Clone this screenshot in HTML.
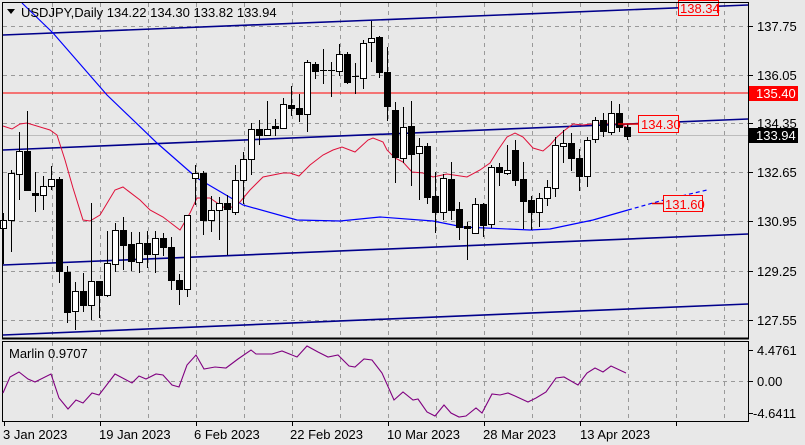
<!DOCTYPE html>
<html><head><meta charset="utf-8">
<style>
html,body{margin:0;padding:0;background:#e8e8e8;}
svg{display:block;font-family:"Liberation Sans",Tahoma,sans-serif;}
</style></head>
<body>
<svg id="s" width="805" height="445" xmlns="http://www.w3.org/2000/svg">
<rect x="0" y="0" width="805" height="445" fill="#e8e8e8"/>
<g id="grid" stroke="#999999" stroke-dasharray="4,4" stroke-width="1"></g>
<line x1="3" y1="135.5" x2="748" y2="135.5" stroke="#bcbcbc"/>
<g stroke="#00008b" stroke-width="1.6" fill="none">
<line x1="3" y1="35" x2="748" y2="5"/>
<line x1="3" y1="150" x2="748" y2="119"/>
<line x1="3" y1="265" x2="748" y2="234"/>
<line x1="3" y1="335" x2="748" y2="304"/>
</g>
<line x1="3" y1="93" x2="748" y2="93" stroke="#ff0000" stroke-width="1"/>
<polyline fill="none" stroke="#0000ff" stroke-width="1.2" points="22,3 53,33 107,95 157,143 197,178 243,205 297,220 340,221 380,217 433,221 463,227 530,230 550,229 593,220 628,210"/>
<polyline fill="none" stroke="#0000ff" stroke-width="1.2" stroke-dasharray="4,3" points="628,210 660,201 707,190"/>
<polyline fill="none" stroke="#e0103a" stroke-width="1" points="3,126 12,129 20,124 27,123 50,130 57,135 65,160 73,188 83,220 90,221 100,215 115,190 123,187 140,200 150,210 163,217 180,230 190,213 197,198 210,198 223,207 230,208 240,202 250,190 263,177 283,173 290,173 299,176 310,165 323,155 333,150 342,147 355,152 368,140 373,138 383,142 387,150 395,158 403,162 412,172 423,173 433,177 447,174 467,177 480,170 490,163 498,150 507,137 515,133 523,137 533,148 543,151 550,145 557,137 565,130 573,124 583,125 600,123 620,124 628,128"/>
<g id="candles"></g>
<line x1="618" y1="124" x2="638" y2="124" stroke="#e00000" stroke-width="1.5"/>
<rect x="638.5" y="115.5" width="40" height="17" fill="#e8e8e8" stroke="#ff0000"/>
<text x="641" y="129" font-size="13" fill="#ff0000">134.30</text>
<line x1="652" y1="203.5" x2="663" y2="203.5" stroke="#e00000" stroke-width="1.5"/>
<rect x="663.5" y="195.5" width="39" height="16" fill="#e8e8e8" stroke="#ff0000"/>
<text x="665" y="209" font-size="13" fill="#ff0000">131.60</text>
<rect x="678.5" y="0.5" width="40" height="15" fill="#e8e8e8" stroke="#ff0000"/>
<text x="680" y="13" font-size="13" fill="#ff0000">138.34</text>
<path d="M7 9 L15 9 L11 14 Z" fill="#000"/>
<text x="21" y="17" font-size="13" fill="#000">USDJPY,Daily  134.22 134.30 133.82 133.94</text>
<rect x="2.5" y="2.5" width="746" height="336" fill="none" stroke="#000"/>
<line x1="2" y1="338.5" x2="749" y2="338.5" stroke="#000" stroke-width="2"/>
<rect x="2.5" y="341.5" width="746" height="80" fill="none" stroke="#000"/>
<line x1="3" y1="381.5" x2="748" y2="381.5" stroke="#999999" stroke-dasharray="4,4"/>
<text x="9" y="358" font-size="13" fill="#000">Marlin 0.9707</text>
<polyline fill="none" stroke="#800080" stroke-width="1.1" points="3,393 10,377 19,372 28,379 35,382 51,374 59,398 68,409 76,400 83,403 92,393 99,395 115,374 132,383 139,376 146,379 156,374 163,375 172,385 179,387 187,365 196,355 204,369 215,367 226,368 238,359 251,350 256,354 272,354 282,351 297,357 307,346 318,352 328,357 338,355 349,366 355,367 364,359 372,360 382,373 394,400 403,392 413,400 418,399 427,412 435,416 444,405 451,413 459,417 466,416 476,408 482,413 492,394 500,395 508,393 515,396 528,402 536,398 546,392 556,378 564,377 578,385 587,373 595,368 603,372 611,366 626,373"/>
<g font-size="13" fill="#000" id="pax"></g>
<rect x="749" y="86" width="49" height="15" fill="#ff0000"/>
<text x="756" y="98" font-size="13" fill="#fff">135.40</text>
<rect x="749" y="128" width="49" height="15" fill="#000"/>
<text x="756" y="140" font-size="13" fill="#fff">133.94</text>
<g font-size="13" fill="#000">
<text x="3" y="439">3 Jan 2023</text>
<text x="99" y="439">19 Jan 2023</text>
<text x="194" y="439">6 Feb 2023</text>
<text x="290" y="439">22 Feb 2023</text>
<text x="387" y="439">10 Mar 2023</text>
<text x="483" y="439">28 Mar 2023</text>
<text x="580" y="439">13 Apr 2023</text>
</g>
<g id="ticks" stroke="#000"></g>
</svg>
<script>
var NS="http://www.w3.org/2000/svg";
function el(p,t,a){var e=document.createElementNS(NS,t);for(var k in a)e.setAttribute(k,a[k]);p.appendChild(e);return e;}
var g=document.getElementById('grid');
[26,75,123,172,221,271,320].forEach(function(y){el(g,'line',{x1:3,y1:y+.5,x2:748,y2:y+.5});});
for(var x=52;x<748;x+=48){el(g,'line',{x1:x+.5,y1:3,x2:x+.5,y2:338});el(g,'line',{x1:x+.5,y1:342,x2:x+.5,y2:421});}
var pax=document.getElementById('pax'),tk=document.getElementById('ticks');
[[26,'137.75'],[75,'136.05'],[123,'134.35'],[172,'132.65'],[221,'130.95'],[271,'129.25'],[320,'127.55'],[350,'4.4761'],[381,'0.00'],[413,'-4.6411']].forEach(function(p){
 var t=el(pax,'text',{x:p[1][0]=='-'?753:757,y:p[0]+5});t.textContent=p[1];
 el(tk,'line',{x1:749,y1:p[0]+.5,x2:753,y2:p[0]+.5});});
for(var x=4;x<748;x+=96){el(tk,'line',{x1:x+.5,y1:422,x2:x+.5,y2:426});}
var C=[[3,213,264,228,220],[11,170,252,220,173],[19,132,200,174,151],[27,111,191,151,190],[35,172,212,193,195],[43,176,210,195,186],[51,166,190,186,179],[59,177,283,179,271],[67,266,323,272,312],[75,282,330,311,291],[83,273,312,291,305],[91,203,320,305,281],[99,282,318,281,295],[107,231,297,295,263],[115,223,272,264,230],[123,217,270,230,245],[131,232,271,244,261],[139,232,273,262,243],[147,231,268,243,254],[155,231,273,254,238],[163,233,256,238,247],[171,237,290,247,280],[179,274,305,280,289],[187,215,297,289,215],[195,165,205,178,173],[203,171,235,173,220],[211,196,232,220,210],[219,197,240,210,203],[227,195,255,203,209],[235,165,215,212,180],[243,152,204,180,159],[251,123,175,159,129],[259,120,145,129,135],[267,101,135,135,129],[275,119,136,126,128],[283,98,128,128,104],[291,86,116,105,108],[299,94,122,108,114],[307,60,132,114,62],[315,62,79,64,71],[323,49,84,70,71],[331,62,97,70,71],[339,44,76,71,54],[347,52,84,54,82],[355,63,94,76,77],[363,40,89,78,43],[371,21,62,42,38],[379,36,78,37,72],[387,47,121,72,106],[395,102,183,110,157],[403,107,163,158,127],[411,101,186,126,154],[419,138,200,153,146],[427,143,204,146,197],[435,172,233,196,212],[443,174,220,212,178],[451,162,220,179,210],[459,202,240,209,227],[467,222,260,226,228],[475,198,234,233,204],[483,203,237,204,225],[491,165,228,224,167],[499,163,186,167,172],[507,145,175,173,170],[515,140,186,150,180],[523,162,229,179,201],[531,196,230,200,212],[539,193,227,212,198],[547,180,206,198,187],[555,137,197,188,145],[563,130,163,146,143],[571,133,171,143,158],[579,149,191,158,176],[587,137,187,176,140],[595,117,143,139,120],[603,113,137,120,131],[611,101,135,132,113],[619,104,132,113,127],[627,124,140,127,136]];
var cg=document.getElementById('candles');
C.forEach(function(c){var x=c[0],h=c[1],l=c[2],o=c[3],cl=c[4];
 el(cg,'line',{x1:x+.5,y1:h,x2:x+.5,y2:l,stroke:'#000','stroke-width':1});
 var top=Math.min(o,cl),bh=Math.max(Math.abs(o-cl),1),bull=cl<o;
 if(bh<=1){el(cg,'line',{x1:x-3,y1:top+.5,x2:x+4,y2:top+.5,stroke:'#000'});}
 else el(cg,'rect',{x:x-3+.5,y:top+.5,width:6,height:bh,fill:bull?'#fff':'#000',stroke:'#000'});});
</script>
</body></html>
